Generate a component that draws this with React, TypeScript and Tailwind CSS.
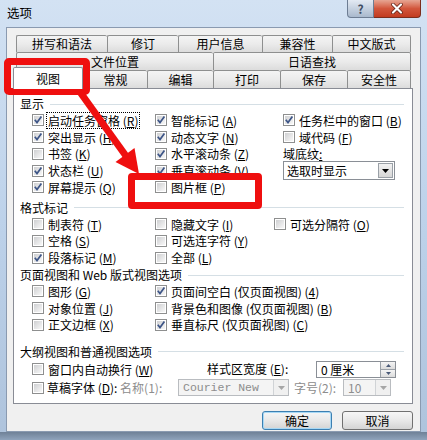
import React from 'react'

const font = "font-['Noto_Sans_CJK_SC',sans-serif]"

function Box({ on }: { on?: boolean }) {
  return (
    <span className="relative inline-block w-[12px] h-[12px] shrink-0 border border-[#8e8f8f] bg-white">
      <span className="absolute inset-[1px] bg-linear-to-br from-[#cfd0d2] to-[#f8f8f8]" />
      {on && (
        <svg className="absolute inset-0" width="10" height="10" viewBox="0 0 10 10">
          <path d="M1.8 4.8 L4 7.6 L8.4 1.6" fill="none" stroke="#3d5587" strokeWidth="1.7" />
        </svg>
      )}
    </span>
  )
}

function Item({ t, k, on, w, focus }: { t: string; k: string; on?: boolean; w?: string; focus?: boolean }) {
  return (
    <div className={`flex items-center shrink-0 ${w ?? ''}`}>
      <Box on={on} />
      <span className={`ml-[3px] px-[1px] leading-[15px] whitespace-nowrap ${focus ? 'outline outline-1 outline-dotted outline-black' : ''}`}>
        {t} (<span className="underline underline-offset-1">{k}</span>)
      </span>
    </div>
  )
}

function Head({ t }: { t: string }) {
  return (
    <div className="flex items-center h-[16px] pl-[6px] pr-[8px]">
      <span className="whitespace-nowrap">{t}</span>
      <span className="flex-1 ml-[6px] h-px bg-[#d5dfe5]" />
    </div>
  )
}

function Row({ children, h = 'h-[16.75px]' }: { children: React.ReactNode; h?: string }) {
  return <div className={`flex items-center pl-[18px] ${h}`}>{children}</div>
}

function Tab({ t, w, sel, last }: { t: string; w: string; sel?: boolean; last?: boolean }) {
  if (sel)
    return (
      <div className={`relative z-10 -ml-[3px] -mb-px h-[22px] ${w} flex items-center justify-center bg-white border border-b-0 border-[#898c95] rounded-t-[2px]`}>
        {t}
      </div>
    )
  return (
    <div
      className={`h-full ${w} flex items-center justify-center border-t border-l ${last ? 'border-r' : ''} border-[#8e8f8f] rounded-t-[2px] bg-linear-to-b from-[#f4f4f4] via-[#ebebeb] to-[#dcdcdc]`}
    >
      {t}
    </div>
  )
}

function Combo({ t, w, off, mono }: { t: string; w: string; off?: boolean; mono?: boolean }) {
  return (
    <div className={`flex h-[17px] ${w} border ${off ? 'border-[#b9bcc0] bg-[#f4f4f4] text-[#8d8d8d]' : 'border-[#8a8f96] bg-white'}`}>
      <span className={`flex-1 pl-[4px] leading-[15px] whitespace-nowrap overflow-hidden ${mono ? "font-['Liberation_Mono',monospace] text-[11.5px]" : ''}`}>{t}</span>
      <span className={`w-[15px] flex items-center justify-center border-l ${off ? 'border-[#d0d3d6] bg-[#f0f0f0]' : 'border-[#9aa0a7] bg-linear-to-b from-[#f2f2f2] to-[#d6d6d6]'}`}>
        <svg width="7" height="4" viewBox="0 0 7 4">
          <path d="M0 0 H7 L3.5 4 Z" fill={off ? '#a6a6a6' : '#000'} />
        </svg>
      </span>
    </div>
  )
}

export default function App() {
  return (
    <div className={`relative w-[427px] h-[440px] overflow-hidden text-[12px] text-black ${font} bg-linear-to-b from-[#d3e2f3] via-[#bdd2ea] to-[#aec3dc]`}>
      {/* title bar */}
      <div className="flex h-[27px]">
        <div className="pl-[7px] pt-[4px] text-[12.5px]">选项</div>
        <div className="flex-1" />
        <div className="flex h-[18px] mr-[6px]">
          <div className="w-[27px] flex items-center justify-center border border-[#6d7d93] border-t-0 rounded-bl-[4px] bg-linear-to-b from-[#e3eaf3] to-[#a9b9cd] text-[#3f4d63] font-bold text-[12px] leading-none">
            ?
          </div>
          <div className="w-[47px] flex items-center justify-center border border-[#7b2d1d] border-t-0 border-l-0 rounded-br-[4px] bg-linear-to-b from-[#e6a593] via-[#d2563c] to-[#c23b1f]">
            <svg width="12" height="11" viewBox="0 0 12 11">
              <path d="M2 1.5 L10 9.5 M10 1.5 L2 9.5" stroke="#5a1a0e" strokeWidth="3.6" strokeLinecap="round" />
              <path d="M2 1.5 L10 9.5 M10 1.5 L2 9.5" stroke="#fff" strokeWidth="2.2" strokeLinecap="round" />
            </svg>
          </div>
        </div>
      </div>

      {/* dialog body */}
      <div className="mx-[6px] h-[405px] border border-[#8a9ab0] bg-[#f0f0f0] px-[6px] pt-[7px] flex flex-col">
        <div className="pl-[3px] w-[398px]">
          <div className="flex h-[17px]">
            <Tab t="拼写和语法" w="w-[91px]" />
            <Tab t="修订" w="w-[71px]" />
            <Tab t="用户信息" w="w-[84px]" />
            <Tab t="兼容性" w="w-[70px]" />
            <Tab t="中文版式" w="w-[79px]" last />
          </div>
          <div className="flex h-[18px]">
            <Tab t="文件位置" w="w-[197px]" />
            <Tab t="日语查找" w="w-[198px]" last />
          </div>
          <div className="flex h-[18px] items-end">
            <Tab t="视图" w="w-[70px]" sel />
            <Tab t="常规" w="w-[64px]" />
            <Tab t="编辑" w="w-[66px]" />
            <Tab t="打印" w="w-[67px]" />
            <Tab t="保存" w="w-[67px]" />
            <Tab t="安全性" w="w-[64px]" last />
          </div>
        </div>

        {/* panel */}
        <div className="w-[400px] h-[316px] border border-[#898c95] bg-white pt-[7px] flex flex-col">
          <Head t="显示" />
          <Row>
            <Item t="启动任务窗格" k="R" on focus w="w-[123px]" />
            <Item t="智能标记" k="A" on w="w-[128px]" />
            <Item t="任务栏中的窗口" k="B" on />
          </Row>
          <Row>
            <Item t="突出显示" k="H" on w="w-[123px]" />
            <Item t="动态文字" k="N" on w="w-[128px]" />
            <Item t="域代码" k="F" />
          </Row>
          <Row>
            <Item t="书签" k="K" w="w-[123px]" />
            <Item t="水平滚动条" k="Z" on w="w-[128px]" />
            <span className="whitespace-nowrap">
              域底纹<span className="underline">:</span>
            </span>
          </Row>
          <Row>
            <Item t="状态栏" k="U" on w="w-[123px]" />
            <Item t="垂直滚动条" k="V" on w="w-[128px]" />
            <div className="flex h-[19px] w-[112px] border border-[#8a8f96] bg-white">
              <span className="flex-1 pl-[3px] leading-[17px]">选取时显示</span>
              <span className="w-[15px] my-[1px] mr-[1px] flex items-center justify-center border border-[#9aa0a7] bg-linear-to-b from-[#f2f2f2] to-[#d6d6d6]">
                <svg width="7" height="4" viewBox="0 0 7 4">
                  <path d="M0 0 H7 L3.5 4 Z" fill="#000" />
                </svg>
              </span>
            </div>
          </Row>
          <Row>
            <Item t="屏幕提示" k="Q" on w="w-[123px]" />
            <Item t="图片框" k="P" w="w-[128px]" />
          </Row>

          <div className="mt-[4px]">
            <Head t="格式标记" />
          </div>
          <Row>
            <Item t="制表符" k="T" w="w-[123px]" />
            <Item t="隐藏文字" k="I" w="w-[119px]" />
            <Item t="可选分隔符" k="O" />
          </Row>
          <Row>
            <Item t="空格" k="S" w="w-[123px]" />
            <Item t="可选连字符" k="Y" w="w-[119px]" />
          </Row>
          <Row>
            <Item t="段落标记" k="M" on w="w-[123px]" />
            <Item t="全部" k="L" w="w-[119px]" />
          </Row>

          <div className="mt-[1px]">
            <Head t="页面视图和 Web 版式视图选项" />
          </div>
          <Row>
            <Item t="图形" k="G" w="w-[123px]" />
            <Item t="页面间空白 (仅页面视图)" k="4" on />
          </Row>
          <Row>
            <Item t="对象位置" k="J" w="w-[123px]" />
            <Item t="背景色和图像 (仅页面视图)" k="B" />
          </Row>
          <Row>
            <Item t="正文边框" k="X" w="w-[123px]" />
            <Item t="垂直标尺 (仅页面视图)" k="C" on />
          </Row>

          <div className="mt-[10.5px]">
            <Head t="大纲视图和普通视图选项" />
          </div>
          <Row h="h-[17px] mt-[1px]">
            <Item t="窗口内自动换行" k="W" w="w-[175px]" />
            <span className="w-[109px] whitespace-nowrap">
              样式区宽度 (<span className="underline">E</span>):
            </span>
            <div className="flex h-[17px] w-[80px] border border-[#8a8f96] bg-white">
              <span className="flex-1 pl-[4px] leading-[15px]">0 厘米</span>
              <span className="w-[15px] flex flex-col border-l border-[#9aa0a7]">
                <span className="flex-1 flex items-center justify-center border-b border-[#9aa0a7] bg-linear-to-b from-[#f4f4f4] to-[#dcdcdc]">
                  <svg width="5" height="3" viewBox="0 0 5 3"><path d="M0 3 H5 L2.5 0 Z" fill="#4a5a78" /></svg>
                </span>
                <span className="flex-1 flex items-center justify-center bg-linear-to-b from-[#f4f4f4] to-[#dcdcdc]">
                  <svg width="5" height="3" viewBox="0 0 5 3"><path d="M0 0 H5 L2.5 3 Z" fill="#4a5a78" /></svg>
                </span>
              </span>
            </div>
          </Row>
          <Row h="h-[18px] mt-[1px]">
            <div className="flex items-center w-[146px] shrink-0">
              <Box />
              <span className="ml-[3px] whitespace-nowrap">
                草稿字体 (<span className="underline">D</span>):<span className="text-[#8d8d8d]"> 名称(1):</span>
              </span>
            </div>
            <Combo t="Courier New" w="w-[111px]" off mono />
            <span className="w-[54px] pl-[5px] whitespace-nowrap text-[#8d8d8d]">字号(2):</span>
            <Combo t="10" w="w-[48px]" off />
          </Row>
        </div>

        {/* buttons */}
        <div className="flex justify-end gap-[10px] mt-[7px] pr-[1px]">
          <button className="w-[70px] h-[19px] rounded-[3px] border border-[#3c7fb1] bg-linear-to-b from-[#f6f6f6] via-[#e8e8e8] to-[#d4d4d4] shadow-[inset_0_0_0_1px_#a7d8f5] leading-none">
            确定
          </button>
          <button className="w-[71px] h-[19px] rounded-[3px] border border-[#707070] bg-linear-to-b from-[#f6f6f6] via-[#e8e8e8] to-[#d4d4d4] leading-none">
            取消
          </button>
        </div>
      </div>
      <div className="h-[8px] bg-linear-to-b from-[#6f8197] to-[#8fa3bb]" />

      {/* red annotations */}
      <div className="absolute left-[4px] top-[58px] w-[86px] h-[37px] border-[7px] border-[#ef0f0f] rounded-[5px]" />
      <div className="absolute left-[128px] top-[173px] w-[134px] h-[36px] border-[7px] border-[#ef0f0f] rounded-[4px]" />
      <svg className="absolute left-0 top-0" width="427" height="440" viewBox="0 0 427 440">
        <line x1="80" y1="92" x2="126" y2="156" stroke="#ef0f0f" strokeWidth="7" />
        <polygon points="139,174 134.5,148 115.5,162" fill="#ef0f0f" />
      </svg>
    </div>
  )
}
